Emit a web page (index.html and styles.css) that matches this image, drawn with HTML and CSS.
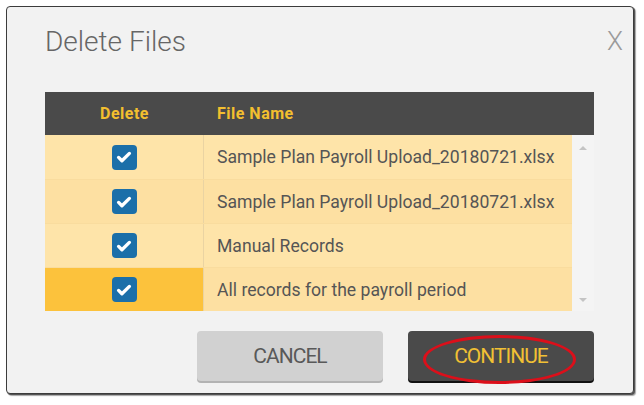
FILE: index.html
```html
<!DOCTYPE html>
<html>
<head>
<meta charset="utf-8">
<link rel="stylesheet" href="styles.css">
</head>
<body>
<div class="dialog">
  <div class="dialog-head">
    <h1 class="title">Delete Files</h1>
    <span class="close">X</span>
  </div>
  <div class="dialog-body">
    <div class="table">
      <div class="thead">
        <div class="th th-del">Delete</div>
        <div class="th th-name">File Name</div>
      </div>
      <div class="tbody">
        <div class="rows">
          <div class="row odd">
            <div class="cell cell-del"><span class="check"><svg viewBox="0 0 24 24" width="20" height="20"><path d="M5.5 12.5l4 4 9-8.8" fill="none" stroke="#fff" stroke-width="4" stroke-linecap="round" stroke-linejoin="round"/></svg></span></div>
            <div class="cell cell-name">Sample Plan Payroll Upload_20180721.xlsx</div>
          </div>
          <div class="row even">
            <div class="cell cell-del"><span class="check"><svg viewBox="0 0 24 24" width="20" height="20"><path d="M5.5 12.5l4 4 9-8.8" fill="none" stroke="#fff" stroke-width="4" stroke-linecap="round" stroke-linejoin="round"/></svg></span></div>
            <div class="cell cell-name">Sample Plan Payroll Upload_20180721.xlsx</div>
          </div>
          <div class="row odd">
            <div class="cell cell-del"><span class="check"><svg viewBox="0 0 24 24" width="20" height="20"><path d="M5.5 12.5l4 4 9-8.8" fill="none" stroke="#fff" stroke-width="4" stroke-linecap="round" stroke-linejoin="round"/></svg></span></div>
            <div class="cell cell-name">Manual Records</div>
          </div>
          <div class="row even active">
            <div class="cell cell-del"><span class="check"><svg viewBox="0 0 24 24" width="20" height="20"><path d="M5.5 12.5l4 4 9-8.8" fill="none" stroke="#fff" stroke-width="4" stroke-linecap="round" stroke-linejoin="round"/></svg></span></div>
            <div class="cell cell-name">All records for the payroll period</div>
          </div>
        </div>
        <div class="scrollbar">
          <span class="arrow up"></span>
          <span class="arrow down"></span>
        </div>
      </div>
    </div>
    <div class="actions">
      <button class="btn btn-cancel">CANCEL</button>
      <button class="btn btn-continue">CONTINUE<span class="ring"></span></button>
    </div>
  </div>
</div>
</body>
</html>
```

FILE: styles.css
```css
html, body {
  margin: 0;
  padding: 0;
  background: #ffffff;
}
body {
  width: 644px;
  height: 405px;
  overflow: hidden;
  font-family: Roboto, "Liberation Sans", sans-serif;
}
.dialog {
  box-sizing: border-box;
  margin: 6px 0 0 6px;
  width: 628px;
  height: 388px;
  border: 1px solid #3c3c3c;
  border-radius: 4px;
  background: #f2f2f2;
  box-shadow: 1px 1px 0 #555, 2px 2px 1px rgba(0,0,0,0.35);
  display: flex;
  flex-direction: column;
}
.dialog-head {
  display: flex;
  justify-content: space-between;
  align-items: flex-start;
  padding: 18px 10px 0 38px;
}
.title {
  margin: 0;
  font-weight: 300;
  font-size: 28px;
  line-height: 34px;
  color: #666666;
}
.close {
  font-weight: 300;
  font-size: 26px;
  line-height: 30px;
  color: #9a9a9a;
  margin-top: 1px;
}
.dialog-body {
  padding: 33px 39px 0 38px;
}
.table {
  width: 549px;
}
.thead {
  display: grid;
  grid-template-columns: 159px 1fr;
  height: 43px;
  align-items: center;
  background: #4a4a4a;
  color: #f3bf2f;
  font-weight: 700;
  font-size: 16px;
  letter-spacing: 0.5px;
}
.th-del {
  text-align: center;
}
.th-name {
  padding-left: 13px;
}
.tbody {
  display: flex;
}
.rows {
  width: 527px;
}
.row {
  display: grid;
  grid-template-columns: 159px 1fr;
  height: 44px;
}
.row.odd {
  background: #fee4a9;
}
.row.even {
  background: #fde0a2;
}
.row + .row {
  border-top: 1px solid #f9dc9e;
  height: 43px;
}
.cell {
  display: flex;
  align-items: center;
}
.cell-del {
  justify-content: center;
  border-right: 1px solid #ead3a2;
}
.row.active .cell-del {
  background: #fcc23c;
}
.cell-name {
  padding-left: 13px;
  font-size: 17.6px;
  color: #555555;
}
.check {
  width: 25px;
  height: 25px;
  border-radius: 4px;
  background: #1b6fa9;
  display: flex;
  align-items: center;
  justify-content: center;
}
.scrollbar {
  width: 22px;
  background: #f4f4f4;
  display: flex;
  flex-direction: column;
  justify-content: space-between;
  align-items: center;
  padding: 11px 0 9px;
  box-sizing: border-box;
}
.arrow {
  width: 0;
  height: 0;
  border-left: 4px solid transparent;
  border-right: 4px solid transparent;
}
.arrow.up {
  border-bottom: 4px solid #c4c4c4;
}
.arrow.down {
  border-top: 4px solid #c4c4c4;
}
.actions {
  display: flex;
  justify-content: flex-end;
  gap: 25px;
  margin-top: 20px;
}
.btn {
  position: relative;
  width: 186px;
  height: 50px;
  border: none;
  border-radius: 4px;
  font-family: Roboto, "Liberation Sans", sans-serif;
  font-size: 21px;
  letter-spacing: -1px;
  padding: 0;
  cursor: pointer;
}
.btn-cancel {
  background: #d1d1d1;
  color: #595959;
  box-shadow: 0 2px 0 #b3b3b3;
}
.btn-continue {
  background: #4a4a4a;
  color: #f1c034;
  box-shadow: 0 2px 0 #111111;
}
.ring {
  position: absolute;
  left: 15px;
  top: 4px;
  width: 153px;
  height: 49px;
  box-sizing: border-box;
  border: 3px solid #dc0f1a;
  border-radius: 50%;
  pointer-events: none;
}
```
